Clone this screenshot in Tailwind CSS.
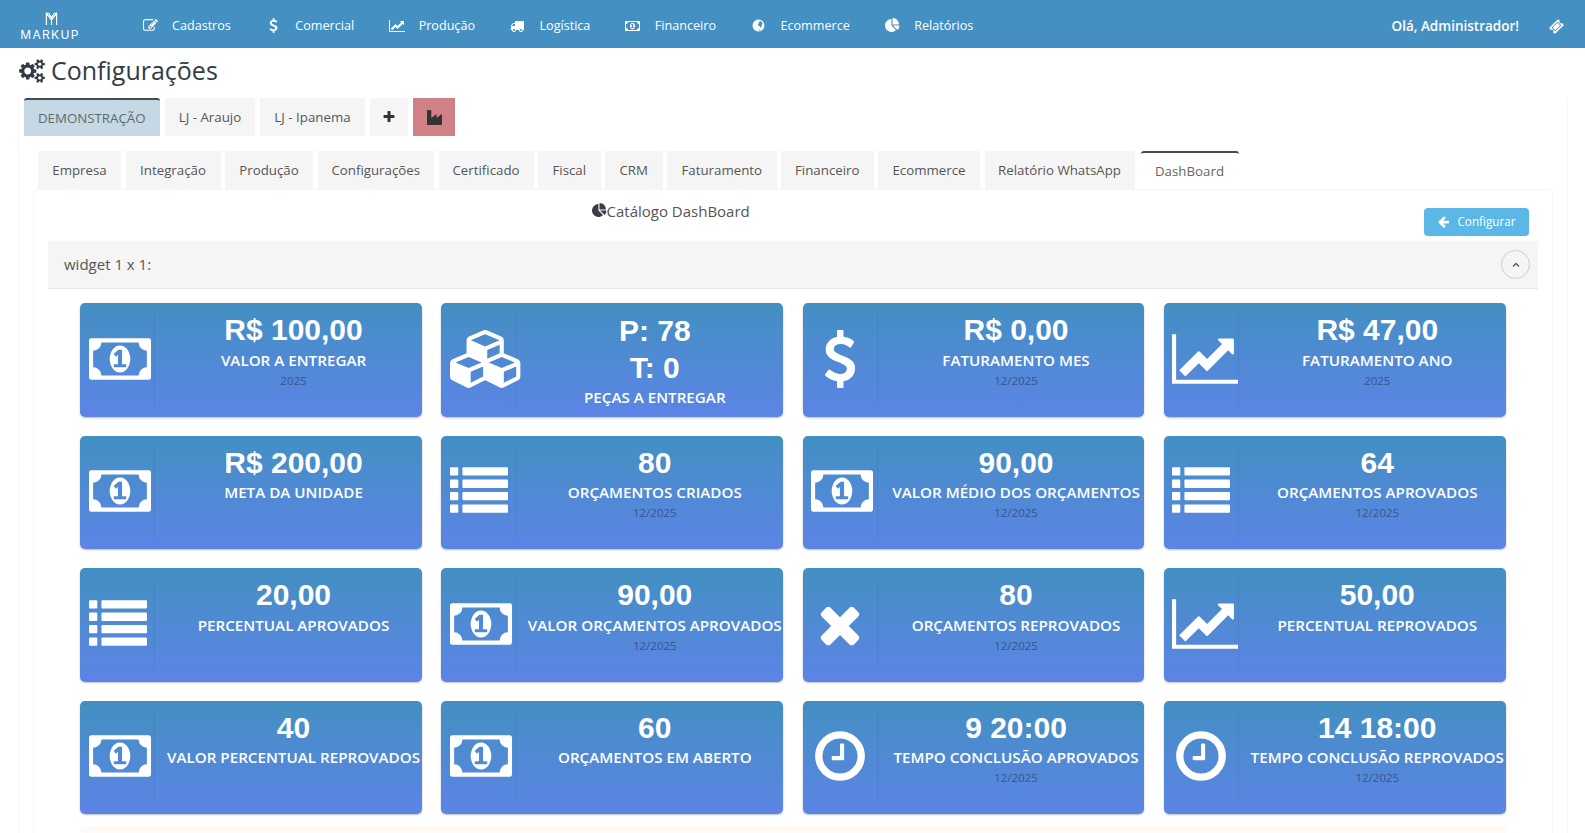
<!DOCTYPE html>
<html lang="pt-BR">
<head>
<meta charset="utf-8">
<title>Configurações</title>
<script src="https://cdn.jsdelivr.net/npm/@tailwindcss/browser@4"></script>
</head>
<body class="bg-white font-['Open_Sans',sans-serif] text-[#555] overflow-hidden">
<svg class="hidden" width="0" height="0">
<defs>
<symbol id="i-money" viewBox="-64 0 1920 1792"><path d="M704 1152h384v-96h-128v-448h-114l-148 137 77 80q42-37 55-57h2v288h-128v96zm512-256q0 70-21 142t-59.500 134-101.500 101-138 39-138-39-101.500-101-59.500-134-21-142 21-142 59.500-134 101.500-101 138-39 138 39 101.500 101 59.500 134 21 142zm512 256v-512q-106 0-181-75t-75-181h-1152q0 106-75 181t-181 75v512q106 0 181 75t75 181h1152q0-106 75-181t181-75zm128-832v1152q0 26-19 45t-45 19h-1792q-26 0-45-19t-19-45v-1152q0-26 19-45t45-19h1792q26 0 45 19t19 45z"/></symbol>
<symbol id="i-chart" viewBox="0 0 2048 1792"><path d="M2048 1536v128h-2048v-1536h128v1408h1920zm-128-1248v435q0 21-19.500 29.500t-35.500-7.500l-121-121-633 633q-10 10-23 10t-23-10l-233-233-416 416-192-192 585-585q10-10 23-10t23 10l233 233 464-464-121-121q-16-16-7.500-35.500t29.500-19.500h435q14 0 23 9t9 23z"/></symbol>
<symbol id="i-list" viewBox="0 0 1792 1792"><rect x="0" y="160" width="256" height="256" rx="30"/><rect x="0" y="544" width="256" height="256" rx="30"/><rect x="0" y="928" width="256" height="256" rx="30"/><rect x="0" y="1312" width="256" height="256" rx="30"/><rect x="384" y="160" width="1408" height="256" rx="30"/><rect x="384" y="544" width="1408" height="256" rx="30"/><rect x="384" y="928" width="1408" height="256" rx="30"/><rect x="384" y="1312" width="1408" height="256" rx="30"/></symbol>
<symbol id="i-times" viewBox="0 0 1792 1792"><path d="M1490 1322q0 40-28 68l-136 136q-28 28-68 28t-68-28l-294-294-294 294q-28 28-68 28t-68-28l-136-136q-28-28-28-68t28-68l294-294-294-294q-28-28-28-68t28-68l136-136q28-28 68-28t68 28l294 294 294-294q28-28 68-28t68 28l136 136q28 28 28 68t-28 68l-294 294 294 294q28 28 28 68z"/></symbol>
<symbol id="i-clock" viewBox="0 0 1792 1792"><path d="M1024 544v448q0 14-9 23t-23 9h-320q-14 0-23-9t-9-23v-64q0-14 9-23t23-9h224v-352q0-14 9-23t23-9h64q14 0 23 9t9 23zm416 352q0-148-73-273t-198-198-273-73-273 73-198 198-73 273 73 273 198 198 273 73 273-73 198-198 73-273zm224 0q0 209-103 385.500t-279.500 279.500-385.500 103-385.500-103-279.500-279.500-103-385.500 103-385.500 279.500-279.500 385.500-103 385.500 103 279.500 279.500 103 385.500z"/></symbol>
<symbol id="i-usd" viewBox="0 0 1792 1792"><path d="M1362 1185q0 153-99.500 263.500t-258.500 136.500v175q0 14-9 23t-23 9h-135q-13 0-22.500-9.500t-9.500-22.500v-175q-66-9-127.500-31t-101.500-44.500-74-48-46.500-37.500-17.500-18q-17-21-2-41l103-135q7-10 23-12 15-2 24 9l2 2q113 99 243 125 37 8 74 8 81 0 142.500-43t61.500-122q0-28-15-53t-33.500-42-58.500-37.500-66-32-80-32.500q-39-16-61.500-25t-61.500-26.500-62.500-31-56.500-35.500-53.500-42.500-43.500-49-35.500-58-21-66.500-8.500-78q0-138 98-242t255-134v-180q0-13 9.500-22.500t22.500-9.500h135q14 0 23 9t9 23v176q57 6 110.500 23t87 33.500 63.500 37.500 39 29 15 14q17 18 5 38l-81 146q-8 15-23 16-14 3-27-7-3-3-14.500-12t-39-26.500-58.500-32-74.500-26-85.500-11.500q-95 0-155 43t-60 111q0 26 8.500 48t29.500 41.500 39.500 33 56 31 60.500 27 70 27.500q53 20 81 31.500t76 35 75.500 42.500 62 50 53 63.500 31.500 76.500 13 94z"/></symbol>
<symbol id="i-cubes" viewBox="0 0 2304 1792"><path d="M640 1632l384-192v-314l-384 164v342zm-64-454l404-173-404-173-404 173zm1088 454l384-192v-314l-384 164v342zm-64-454l404-173-404-173-404 173zm-448-293l384-165v-266l-384 164v267zm-64-379l441-189-441-189-441 189zm1088 518v416q0 36-19 67t-52 47l-448 224q-25 14-57 14t-57-14l-448-224q-4-2-7-4-2 2-7 4l-448 224q-25 14-57 14t-57-14l-448-224q-33-16-52-47t-19-67v-416q0-38 21.500-70t56.500-48l434-186v-400q0-38 21.500-70t56.500-48l448-192q23-10 50-10t50 10l448 192q35 16 56.500 48t21.500 70v400l434 186q36 16 57 48t21 70z"/></symbol>
<symbol id="i-cogs" viewBox="0 0 1920 1792"><path d="M896 896q0-106-75-181t-181-75-181 75-75 181 75 181 181 75 181-75 75-181zm768 512q0-52-38-90t-90-38-90 38-38 90q0 53 37.500 90.500t90.500 37.500 90.500-37.500 37.500-90.500zm0-1024q0-52-38-90t-90-38-90 38-38 90q0 53 37.500 90.500t90.500 37.500 90.500-37.500 37.500-90.500zm-384 421v185q0 10-7 19.500t-16 10.500l-155 24q-11 35-32 76 34 48 90 115 7 11 7 20 0 12-7 19-23 30-82.500 89.500t-78.500 59.500q-11 0-21-7l-115-90q-37 19-77 31-11 108-23 155-7 24-30 24h-186q-11 0-20-7.500t-10-17.500l-23-153q-34-10-75-31l-118 89q-7 7-20 7-11 0-21-8-144-133-144-160 0-9 7-19 10-14 41-53t47-61q-23-44-35-82l-152-24q-10-1-17-9.500t-7-19.500v-185q0-10 7-19.500t16-10.500l155-24q11-35 32-76-34-48-90-115-7-11-7-20 0-12 7-20 22-30 82-89t79-59q11 0 21 7l115 90q34-18 77-32 11-108 23-154 7-24 30-24h186q11 0 20 7.500t10 17.500l23 153q34 10 75 31l118-89q8-7 20-7 11 0 21 8 144 133 144 160 0 8-7 19-12 16-42 54t-45 60q23 48 34 82l152 23q10 2 17 10.500t7 19.500zm640 533v140q0 16-149 31-12 27-30 52 51 113 51 138 0 4-4 7-122 71-124 71-8 0-46-47t-52-68q-20 2-30 2t-30-2q-14 21-52 68t-46 47q-2 0-124-71-4-3-4-7 0-25 51-138-18-25-30-52-149-15-149-31v-140q0-16 149-31 13-29 30-52-51-113-51-138 0-4 4-7 4-2 35-20t59-34 30-16q8 0 46 46.500t52 67.500q20-2 30-2t30 2q51-71 92-112l6-2q4 0 124 70 4 3 4 7 0 25-51 138 17 23 30 52 149 15 149 31zm0-1024v140q0 16-149 31-12 27-30 52 51 113 51 138 0 4-4 7-122 71-124 71-8 0-46-47t-52-68q-20 2-30 2t-30-2q-14 21-52 68t-46 47q-2 0-124-71-4-3-4-7 0-25 51-138-18-25-30-52-149-15-149-31v-140q0-16 149-31 13-29 30-52-51-113-51-138 0-4 4-7 4-2 35-20t59-34 30-16q8 0 46 46.500t52 67.500q20-2 30-2t30 2q51-71 92-112l6-2q4 0 124 70 4 3 4 7 0 25-51 138 17 23 30 52 149 15 149 31z"/></symbol>
<symbol id="i-edit" viewBox="0 0 1792 1792"><path d="M888 1184l116-116-152-152-116 116v56h96v96h56zm440-720q-16-16-33 1l-350 350q-17 17-1 33t33-1l350-350q17-17 1-33zm80 594v190q0 119-84.500 203.500t-203.500 84.500h-832q-119 0-203.500-84.500t-84.500-203.500v-832q0-119 84.500-203.500t203.500-84.500h832q63 0 117 25 15 7 18 23 3 17-9 29l-49 49q-14 14-32 8-23-6-45-6h-832q-66 0-113 47t-47 113v832q0 66 47 113t113 47h832q66 0 113-47t47-113v-126q0-13 9-22l64-64q15-15 35-7t20 29zm-96-738l288 288-672 672h-288v-288zm444 132l-92 92-288-288 92-92q28-28 68-28t68 28l152 152q28 28 28 68t-28 68z"/></symbol>
<symbol id="i-truck" viewBox="0 0 1792 1792"><path d="M640 1408q0-52-38-90t-90-38-90 38-38 90 38 90 90 38 90-38 38-90zm-384-512h384v-256h-158q-13 0-22 9l-195 195q-9 9-9 22v30zm1280 512q0-52-38-90t-90-38-90 38-38 90 38 90 90 38 90-38 38-90zm256-1088v1024q0 15-4 26.500t-13.500 18.500-16.500 11.500-23.500 6-22.500 2-25.500 0-22.500-.5q0 106-75 181t-181 75-181-75-75-181h-384q0 106-75 181t-181 75-181-75-75-181h-64q-3 0-22.500.5t-25.500 0-22.500-2-23.500-6-16.500-11.500-13.500-18.500-4-26.500q0-26 19-45t45-19v-320q0-8-.5-35t0-38 2.500-34.500 6.500-37 14-30.500 22.500-30l198-198q19-19 50.500-32t58.500-13h160v-192q0-26 19-45t45-19h1024q26 0 45 19t19 45z"/></symbol>
<symbol id="i-pie" viewBox="0 0 1792 1792"><path d="M768 890l546 546q-106 108-247.500 168t-298.500 60q-209 0-385.500-103t-279.500-279.500-103-385.500 103-385.500 279.500-279.500 385.500-103v762zm187 6h773q0 157-60 298.500t-168 247.500zm709-128h-768v-768q209 0 385.500 103t279.500 279.500 103 385.500z"/></symbol>
<symbol id="i-arrow" viewBox="0 0 1792 1792"><path d="M1664 896v128q0 53-32.500 90.500t-84.500 37.500h-704l293 294q38 36 38 90t-38 90l-75 76q-37 37-90 37-52 0-91-37l-651-652q-37-37-37-90 0-52 37-91l651-650q38-38 91-38 52 0 90 38l75 74q38 38 38 91t-38 91l-293 293h704q52 0 84.500 37.500t32.500 90.500z" transform="translate(0 -128)"/></symbol>
<symbol id="i-plus" viewBox="0 0 1792 1792"><path d="M1600 736v192q0 40-28 68t-68 28h-416v416q0 40-28 68t-68 28h-192q-40 0-68-28t-28-68v-416h-416q-40 0-68-28t-28-68v-192q0-40 28-68t68-28h416v-416q0-40 28-68t68-28h192q40 0 68 28t28 68v416h416q40 0 68 28t28 68z"/></symbol>
<symbol id="i-industry" viewBox="0 0 1792 1792"><path d="M448 0q26 0 45 19t19 45v891l536-429q17-14 40-14 26 0 45 19t19 45v379l536-429q17-14 40-14 26 0 45 19t19 45v1152q0 26-19 45t-45 19h-1664q-26 0-45-19t-19-45v-1664q0-26 19-45t45-19h384z"/></symbol>
<symbol id="i-ticket" viewBox="0 0 1792 1792"><path d="M1024 452l316 316-572 572-316-316zm-211 979l618-618q19-19 19-45t-19-45l-362-362q-18-18-45-18t-45 18l-618 618q-19 19-19 45t19 45l362 362q18 18 45 18t45-18zm889-637l-907 908q-37 37-90.500 37t-90.500-37l-126-126q56-56 56-136t-56-136-136-56-136 56l-125-126q-37-37-37-90.500t37-90.500l907-906q37-37 90.500-37t90.500 37l125 125q-56 56-56 136t56 136 136 56 136-56l126 125q37 37 37 90.500t-37 90.500z"/></symbol>
<symbol id="i-globe" viewBox="0 0 24 24"><path fill-rule="evenodd" d="M12 1a11 11 0 1 0 0 22 11 11 0 0 0 0-22zM15 3.500l3.500 2.500 1 3-2 2.500.5 3-2 1.500-1.500-2.500-2.500-1-1-2.500 1.500-2 .5-2.500zM13 19l2.500.5 .5 1-2.500 .5z"/></symbol>
</defs>
</svg>

<header class="h-[48px] bg-[#4490c3] text-white flex items-center pl-[21px] pr-[21px]">
  <div class="w-[58px] flex flex-col items-center shrink-0 leading-none mt-[4px]">
    <svg class="w-[13px] h-[14px] ml-[3px] mb-[3px]" viewBox="0 0 14 15" fill="none" stroke="white" stroke-width="1.300"><path d="M1.500 14V1.500L7 8.500l5.500-7V14M4 1.500L7 6l3-4.500M7 8.500V14M1.500 1.500h2.500M10 1.500h2.500"/></svg>
    <span class="font-['Inter',sans-serif] font-normal text-[12px] tracking-[1.300px] leading-[11px] whitespace-nowrap">MARKUP</span>
  </div>
  <nav class="flex items-center ml-[59px] gap-[30.500px] text-[12.600px] mt-[4px]">
    <a class="flex items-center gap-[10px]"><span class="w-[24px] flex justify-center"><svg class="w-[15px] h-[15px] fill-white"><use href="#i-edit"/></svg></span>Cadastros</a>
    <a class="flex items-center gap-[10px]"><span class="w-[24px] flex justify-center"><svg class="w-[15px] h-[15px] fill-white"><use href="#i-usd"/></svg></span>Comercial</a>
    <a class="flex items-center gap-[10px]"><span class="w-[24px] flex justify-center"><svg class="w-[16px] h-[14px] fill-white"><use href="#i-chart"/></svg></span>Produção</a>
    <a class="flex items-center gap-[10px]"><span class="w-[24px] flex justify-center"><svg class="w-[14px] h-[14px] fill-white"><use href="#i-truck"/></svg></span>Logística</a>
    <a class="flex items-center gap-[10px]"><span class="w-[24px] flex justify-center"><svg class="w-[15px] h-[14px] fill-white"><use href="#i-money"/></svg></span>Financeiro</a>
    <a class="flex items-center gap-[10px]"><span class="w-[24px] flex justify-center"><svg class="w-[13px] h-[13px] fill-white"><use href="#i-globe"/></svg></span>Ecommerce</a>
    <a class="flex items-center gap-[10px]"><span class="w-[24px] flex justify-center"><svg class="w-[15px] h-[15px] fill-white"><use href="#i-pie"/></svg></span>Relatórios</a>
  </nav>
  <div class="ml-auto flex items-center gap-[30px] mt-[4px]">
    <span class="font-semibold text-[13.500px]">Olá, Administrador!</span>
    <svg class="w-[15px] h-[15px] fill-white"><use href="#i-ticket"/></svg>
  </div>
</header>

<div class="h-[50px] flex items-center pl-[19px] pb-[5px] gap-[6px] text-[#333c46]">
  <svg class="w-[26px] h-[24px] fill-[#333c46]"><use href="#i-cogs"/></svg>
  <h1 class="text-[25px] leading-none font-normal">Configurações</h1>
</div>

<div class="ml-[18px] mr-[17px] h-[735px] border-x border-[#f8f8f8] overflow-hidden">
  <div class="flex gap-[5px] pl-[4.500px] h-[38px] text-[13.300px]">
    <a class="w-[136.500px] pt-[1px] flex items-center justify-center bg-[#c5d8e3] border-t-2 border-[#414a52] rounded-t-[3px] text-[#5f6a70]">DEMONSTRAÇÃO</a>
    <a class="w-[90px] pt-[2px] flex items-center justify-center bg-[#f5f5f5]">LJ - Araujo</a>
    <a class="w-[105px] pt-[2px] flex items-center justify-center bg-[#f5f5f5]">LJ - Ipanema</a>
    <a class="w-[38px] flex items-center justify-center bg-[#f5f5f5]"><svg class="w-[14px] h-[14px] fill-[#333]"><use href="#i-plus"/></svg></a>
    <a class="w-[42px] flex items-center justify-center bg-[#cf8186]"><svg class="w-[15px] h-[15px] fill-[#333]"><use href="#i-industry"/></svg></a>
  </div>

  <div class="flex gap-[4.500px] pl-[19px] mt-[15px] h-[38px] text-[13.300px] text-[#555]">
    <a class="w-[83px] pt-[2px] flex items-center justify-center bg-[#f5f5f5]">Empresa</a>
    <a class="w-[95px] pt-[2px] flex items-center justify-center bg-[#f5f5f5]">Integração</a>
    <a class="w-[88px] pt-[2px] flex items-center justify-center bg-[#f5f5f5]">Produção</a>
    <a class="w-[116.500px] pt-[2px] flex items-center justify-center bg-[#f5f5f5]">Configurações</a>
    <a class="w-[95px] pt-[2px] flex items-center justify-center bg-[#f5f5f5]">Certificado</a>
    <a class="w-[62.500px] pt-[2px] flex items-center justify-center bg-[#f5f5f5]">Fiscal</a>
    <a class="w-[57.500px] pt-[2px] flex items-center justify-center bg-[#f5f5f5]">CRM</a>
    <a class="w-[109.500px] pt-[2px] flex items-center justify-center bg-[#f5f5f5]">Faturamento</a>
    <a class="w-[92.500px] pt-[2px] flex items-center justify-center bg-[#f5f5f5]">Financeiro</a>
    <a class="w-[102px] pt-[2px] flex items-center justify-center bg-[#f5f5f5]">Ecommerce</a>
    <a class="w-[150px] pt-[2px] flex items-center justify-center bg-[#f5f5f5]">Relatório WhatsApp</a>
    <a class="w-[98px] pt-[1px] ml-[1.500px] flex items-center justify-center bg-white border-t-2 border-[#414a52] rounded-t-[3px] text-[#666]">DashBoard</a>
  </div>

  <section class="ml-[14px] mr-[14px] border border-[#f6f6f6] rounded-t-[4px] pt-[10px] px-[14px] h-[700px]">
    <div class="h-[41px] relative">
      <div class="flex items-start text-[15px] text-[#555] ml-[543.500px] leading-[22px]"><svg class="w-[15px] h-[15px] fill-[#3a3f45] mt-[3px]"><use href="#i-pie"/></svg>Catálogo DashBoard</div>
      <a class="absolute right-[9px] top-[8px] w-[105px] h-[28px] rounded-[4px] bg-[#5bb7e5] text-white text-[11.700px] flex items-center justify-center gap-[7px]"><svg class="w-[13px] h-[13px] fill-white"><use href="#i-arrow"/></svg>Configurar</a>
    </div>
    <div class="h-[48px] bg-[#f5f5f5] border-b border-[#e8e8e8] flex items-center justify-between pl-[16px] pr-[8px] text-[15px] text-[#555]">
      <span>widget 1 x 1:</span>
      <span class="w-[29px] h-[29px] rounded-full border border-[#ccc] flex items-center justify-center"><svg class="w-[8px] h-[6px]" viewBox="0 0 8 6" fill="none" stroke="#555" stroke-width="1.300"><path d="M1 4.500l3-3 3 3"/></svg></span>
    </div>

    <div class="grid grid-cols-4 gap-x-[19.500px] gap-y-[19px] ml-[32px] mr-[32.500px] mt-[14px]">

      <article class="h-[113.500px] flex rounded-[5px] bg-gradient-to-b from-[#428fc2] to-[#5c84e6] shadow-[0_1px_2px_rgba(0,0,0,0.25)] text-white">
        <div class="w-[85.300px] shrink-0 pr-[10px] py-[11px]"><div class="h-full pl-[8.600px] pb-[2px] border-r border-black/5 flex items-center"><svg class="w-[62px] h-[58px] fill-white shrink-0"><use href="#i-money"/></svg></div></div>
        <div class="flex-1 text-center whitespace-nowrap pt-[9px]"><div class="font-['Liberation_Sans',sans-serif] font-bold text-[30px] leading-[36.500px]">R$ 100,00</div><div class="font-semibold text-[15.200px] leading-[22px]">VALOR A ENTREGAR</div><div class="text-[11.500px] leading-[20px] text-[#3a5488]">2025</div></div>
      </article>

      <article class="h-[113.500px] flex rounded-[5px] bg-gradient-to-b from-[#428fc2] to-[#5c84e6] shadow-[0_1px_2px_rgba(0,0,0,0.25)] text-white">
        <div class="w-[85.300px] shrink-0 pr-[10px] py-[11px]"><div class="h-full pl-[8.600px] pb-[2px] border-r border-black/5 flex items-center"><svg class="w-[74.500px] h-[58px] fill-white shrink-0"><use href="#i-cubes"/></svg></div></div>
        <div class="flex-1 text-center whitespace-nowrap pt-[8.500px]"><div class="font-['Liberation_Sans',sans-serif] font-bold text-[30px] leading-[37.500px]">P: 78</div><div class="font-['Liberation_Sans',sans-serif] font-bold text-[30px] leading-[37.500px]">T: 0</div><div class="font-semibold text-[15.200px] leading-[20px]">PEÇAS A ENTREGAR</div></div>
      </article>

      <article class="h-[113.500px] flex rounded-[5px] bg-gradient-to-b from-[#428fc2] to-[#5c84e6] shadow-[0_1px_2px_rgba(0,0,0,0.25)] text-white">
        <div class="w-[85.300px] shrink-0 pr-[10px] py-[11px]"><div class="h-full pl-[8.600px] pb-[2px] border-r border-black/5 flex items-center"><svg class="w-[58px] h-[58px] fill-white shrink-0"><use href="#i-usd"/></svg></div></div>
        <div class="flex-1 text-center whitespace-nowrap pt-[9px]"><div class="font-['Liberation_Sans',sans-serif] font-bold text-[30px] leading-[36.500px]">R$ 0,00</div><div class="font-semibold text-[15.200px] leading-[22px]">FATURAMENTO MES</div><div class="text-[11.500px] leading-[20px] text-[#3a5488]">12/2025</div></div>
      </article>

      <article class="h-[113.500px] flex rounded-[5px] bg-gradient-to-b from-[#428fc2] to-[#5c84e6] shadow-[0_1px_2px_rgba(0,0,0,0.25)] text-white">
        <div class="w-[85.300px] shrink-0 pr-[10px] py-[11px]"><div class="h-full pl-[8.600px] pb-[2px] border-r border-black/5 flex items-center"><svg class="w-[66px] h-[58px] fill-white shrink-0"><use href="#i-chart"/></svg></div></div>
        <div class="flex-1 text-center whitespace-nowrap pt-[9px]"><div class="font-['Liberation_Sans',sans-serif] font-bold text-[30px] leading-[36.500px]">R$ 47,00</div><div class="font-semibold text-[15.200px] leading-[22px]">FATURAMENTO ANO</div><div class="text-[11.500px] leading-[20px] text-[#3a5488]">2025</div></div>
      </article>

      <article class="h-[113.500px] flex rounded-[5px] bg-gradient-to-b from-[#428fc2] to-[#5c84e6] shadow-[0_1px_2px_rgba(0,0,0,0.25)] text-white">
        <div class="w-[85.300px] shrink-0 pr-[10px] py-[11px]"><div class="h-full pl-[8.600px] pb-[2px] border-r border-black/5 flex items-center"><svg class="w-[62px] h-[58px] fill-white shrink-0"><use href="#i-money"/></svg></div></div>
        <div class="flex-1 text-center whitespace-nowrap pt-[9px]"><div class="font-['Liberation_Sans',sans-serif] font-bold text-[30px] leading-[36.500px]">R$ 200,00</div><div class="font-semibold text-[15.200px] leading-[22px]">META DA UNIDADE</div></div>
      </article>

      <article class="h-[113.500px] flex rounded-[5px] bg-gradient-to-b from-[#428fc2] to-[#5c84e6] shadow-[0_1px_2px_rgba(0,0,0,0.25)] text-white">
        <div class="w-[85.300px] shrink-0 pr-[10px] py-[11px]"><div class="h-full pl-[8.600px] pb-[2px] border-r border-black/5 flex items-center"><svg class="w-[58px] h-[58px] fill-white shrink-0"><use href="#i-list"/></svg></div></div>
        <div class="flex-1 text-center whitespace-nowrap pt-[9px]"><div class="font-['Liberation_Sans',sans-serif] font-bold text-[30px] leading-[36.500px]">80</div><div class="font-semibold text-[15.200px] leading-[22px]">ORÇAMENTOS CRIADOS</div><div class="text-[11.500px] leading-[20px] text-[#3a5488]">12/2025</div></div>
      </article>

      <article class="h-[113.500px] flex rounded-[5px] bg-gradient-to-b from-[#428fc2] to-[#5c84e6] shadow-[0_1px_2px_rgba(0,0,0,0.25)] text-white">
        <div class="w-[85.300px] shrink-0 pr-[10px] py-[11px]"><div class="h-full pl-[8.600px] pb-[2px] border-r border-black/5 flex items-center"><svg class="w-[62px] h-[58px] fill-white shrink-0"><use href="#i-money"/></svg></div></div>
        <div class="flex-1 text-center whitespace-nowrap pt-[9px]"><div class="font-['Liberation_Sans',sans-serif] font-bold text-[30px] leading-[36.500px]">90,00</div><div class="font-semibold text-[15.200px] leading-[22px]">VALOR MÉDIO DOS ORÇAMENTOS</div><div class="text-[11.500px] leading-[20px] text-[#3a5488]">12/2025</div></div>
      </article>

      <article class="h-[113.500px] flex rounded-[5px] bg-gradient-to-b from-[#428fc2] to-[#5c84e6] shadow-[0_1px_2px_rgba(0,0,0,0.25)] text-white">
        <div class="w-[85.300px] shrink-0 pr-[10px] py-[11px]"><div class="h-full pl-[8.600px] pb-[2px] border-r border-black/5 flex items-center"><svg class="w-[58px] h-[58px] fill-white shrink-0"><use href="#i-list"/></svg></div></div>
        <div class="flex-1 text-center whitespace-nowrap pt-[9px]"><div class="font-['Liberation_Sans',sans-serif] font-bold text-[30px] leading-[36.500px]">64</div><div class="font-semibold text-[15.200px] leading-[22px]">ORÇAMENTOS APROVADOS</div><div class="text-[11.500px] leading-[20px] text-[#3a5488]">12/2025</div></div>
      </article>

      <article class="h-[113.500px] flex rounded-[5px] bg-gradient-to-b from-[#428fc2] to-[#5c84e6] shadow-[0_1px_2px_rgba(0,0,0,0.25)] text-white">
        <div class="w-[85.300px] shrink-0 pr-[10px] py-[11px]"><div class="h-full pl-[8.600px] pb-[2px] border-r border-black/5 flex items-center"><svg class="w-[58px] h-[58px] fill-white shrink-0"><use href="#i-list"/></svg></div></div>
        <div class="flex-1 text-center whitespace-nowrap pt-[9px]"><div class="font-['Liberation_Sans',sans-serif] font-bold text-[30px] leading-[36.500px]">20,00</div><div class="font-semibold text-[15.200px] leading-[22px]">PERCENTUAL APROVADOS</div></div>
      </article>

      <article class="h-[113.500px] flex rounded-[5px] bg-gradient-to-b from-[#428fc2] to-[#5c84e6] shadow-[0_1px_2px_rgba(0,0,0,0.25)] text-white">
        <div class="w-[85.300px] shrink-0 pr-[10px] py-[11px]"><div class="h-full pl-[8.600px] pb-[2px] border-r border-black/5 flex items-center"><svg class="w-[62px] h-[58px] fill-white shrink-0"><use href="#i-money"/></svg></div></div>
        <div class="flex-1 text-center whitespace-nowrap pt-[9px]"><div class="font-['Liberation_Sans',sans-serif] font-bold text-[30px] leading-[36.500px]">90,00</div><div class="font-semibold text-[15.200px] leading-[22px]">VALOR ORÇAMENTOS APROVADOS</div><div class="text-[11.500px] leading-[20px] text-[#3a5488]">12/2025</div></div>
      </article>

      <article class="h-[113.500px] flex rounded-[5px] bg-gradient-to-b from-[#428fc2] to-[#5c84e6] shadow-[0_1px_2px_rgba(0,0,0,0.25)] text-white">
        <div class="w-[85.300px] shrink-0 pr-[10px] py-[11px]"><div class="h-full pl-[8.600px] pb-[2px] border-r border-black/5 flex items-center"><svg class="w-[58px] h-[58px] fill-white shrink-0"><use href="#i-times"/></svg></div></div>
        <div class="flex-1 text-center whitespace-nowrap pt-[9px]"><div class="font-['Liberation_Sans',sans-serif] font-bold text-[30px] leading-[36.500px]">80</div><div class="font-semibold text-[15.200px] leading-[22px]">ORÇAMENTOS REPROVADOS</div><div class="text-[11.500px] leading-[20px] text-[#3a5488]">12/2025</div></div>
      </article>

      <article class="h-[113.500px] flex rounded-[5px] bg-gradient-to-b from-[#428fc2] to-[#5c84e6] shadow-[0_1px_2px_rgba(0,0,0,0.25)] text-white">
        <div class="w-[85.300px] shrink-0 pr-[10px] py-[11px]"><div class="h-full pl-[8.600px] pb-[2px] border-r border-black/5 flex items-center"><svg class="w-[66px] h-[58px] fill-white shrink-0"><use href="#i-chart"/></svg></div></div>
        <div class="flex-1 text-center whitespace-nowrap pt-[9px]"><div class="font-['Liberation_Sans',sans-serif] font-bold text-[30px] leading-[36.500px]">50,00</div><div class="font-semibold text-[15.200px] leading-[22px]">PERCENTUAL REPROVADOS</div></div>
      </article>

      <article class="h-[113.500px] flex rounded-[5px] bg-gradient-to-b from-[#428fc2] to-[#5c84e6] shadow-[0_1px_2px_rgba(0,0,0,0.25)] text-white">
        <div class="w-[85.300px] shrink-0 pr-[10px] py-[11px]"><div class="h-full pl-[8.600px] pb-[2px] border-r border-black/5 flex items-center"><svg class="w-[62px] h-[58px] fill-white shrink-0"><use href="#i-money"/></svg></div></div>
        <div class="flex-1 text-center whitespace-nowrap pt-[9px]"><div class="font-['Liberation_Sans',sans-serif] font-bold text-[30px] leading-[36.500px]">40</div><div class="font-semibold text-[15.200px] leading-[22px]">VALOR PERCENTUAL REPROVADOS</div></div>
      </article>

      <article class="h-[113.500px] flex rounded-[5px] bg-gradient-to-b from-[#428fc2] to-[#5c84e6] shadow-[0_1px_2px_rgba(0,0,0,0.25)] text-white">
        <div class="w-[85.300px] shrink-0 pr-[10px] py-[11px]"><div class="h-full pl-[8.600px] pb-[2px] border-r border-black/5 flex items-center"><svg class="w-[62px] h-[58px] fill-white shrink-0"><use href="#i-money"/></svg></div></div>
        <div class="flex-1 text-center whitespace-nowrap pt-[9px]"><div class="font-['Liberation_Sans',sans-serif] font-bold text-[30px] leading-[36.500px]">60</div><div class="font-semibold text-[15.200px] leading-[22px]">ORÇAMENTOS EM ABERTO</div></div>
      </article>

      <article class="h-[113.500px] flex rounded-[5px] bg-gradient-to-b from-[#428fc2] to-[#5c84e6] shadow-[0_1px_2px_rgba(0,0,0,0.25)] text-white">
        <div class="w-[85.300px] shrink-0 pr-[10px] py-[11px]"><div class="h-full pl-[8.600px] pb-[2px] border-r border-black/5 flex items-center"><svg class="w-[58px] h-[58px] fill-white shrink-0"><use href="#i-clock"/></svg></div></div>
        <div class="flex-1 text-center whitespace-nowrap pt-[9px]"><div class="font-['Liberation_Sans',sans-serif] font-bold text-[30px] leading-[36.500px]">9 20:00</div><div class="font-semibold text-[15.200px] leading-[22px]">TEMPO CONCLUSÃO APROVADOS</div><div class="text-[11.500px] leading-[20px] text-[#3a5488]">12/2025</div></div>
      </article>

      <article class="h-[113.500px] flex rounded-[5px] bg-gradient-to-b from-[#428fc2] to-[#5c84e6] shadow-[0_1px_2px_rgba(0,0,0,0.25)] text-white">
        <div class="w-[85.300px] shrink-0 pr-[10px] py-[11px]"><div class="h-full pl-[8.600px] pb-[2px] border-r border-black/5 flex items-center"><svg class="w-[58px] h-[58px] fill-white shrink-0"><use href="#i-clock"/></svg></div></div>
        <div class="flex-1 text-center whitespace-nowrap pt-[9px]"><div class="font-['Liberation_Sans',sans-serif] font-bold text-[30px] leading-[36.500px]">14 18:00</div><div class="font-semibold text-[15.200px] leading-[22px]">TEMPO CONCLUSÃO REPROVADOS</div><div class="text-[11.500px] leading-[20px] text-[#3a5488]">12/2025</div></div>
      </article>

    </div>
    <div class="h-[12px] mt-[12px] ml-[32.500px] mr-[32.500px] bg-[#fffaf5]"></div>
  </section>
</div>
</body>
</html>
